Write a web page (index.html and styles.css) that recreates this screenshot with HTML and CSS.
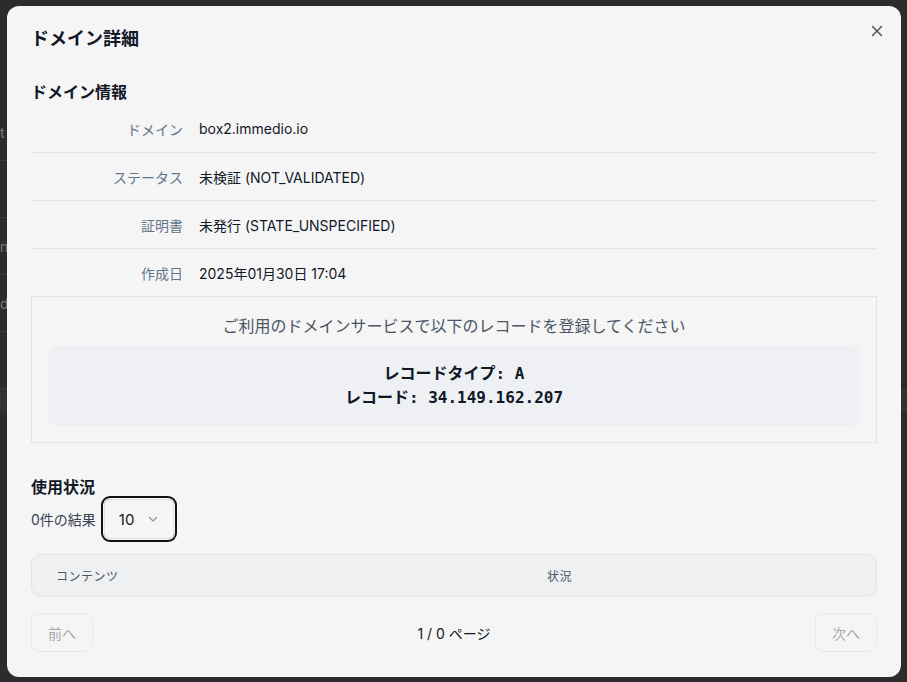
FILE: index.html
```html
<!DOCTYPE html>
<html lang="ja">

<head>
    <meta charset="UTF-8">
    <meta name="viewport" content="width=device-width, initial-scale=1.0">
    <title>ドメイン詳細</title>
    <link rel="stylesheet" href="styles.css">
</head>

<body>

<!-- page behind the dialog -->
<div class="backdrop-page">
    <div class="bg-row"><span>t</span></div>
    <div class="bg-row"></div>
    <div class="bg-row"><span>n</span></div>
    <div class="bg-row"><span>d</span></div>
    <div class="bg-row"></div>
    <div class="bg-band"></div>
</div>

<div class="modal">
    <button class="close-btn" aria-label="閉じる">
        <svg width="14" height="14" viewBox="0 0 14 14">
            <path d="M2.5 2.5 L11.5 11.5 M11.5 2.5 L2.5 11.5" stroke="#4b5563" stroke-width="1.5" stroke-linecap="round"/>
        </svg>
    </button>

    <h1 class="modal-title">ドメイン詳細</h1>

    <h2 class="section-title">ドメイン情報</h2>
    <div class="info-list">
        <div class="info-row">
            <div class="info-label">ドメイン</div>
            <div class="info-value">box2.immedio.io</div>
        </div>
        <div class="info-row">
            <div class="info-label">ステータス</div>
            <div class="info-value">未検証 (NOT_VALIDATED)</div>
        </div>
        <div class="info-row">
            <div class="info-label">証明書</div>
            <div class="info-value">未発行 (STATE_UNSPECIFIED)</div>
        </div>
        <div class="info-row">
            <div class="info-label">作成日</div>
            <div class="info-value">2025年01月30日 17:04</div>
        </div>
    </div>

    <div class="record-box">
        <p class="record-note">ご利用のドメインサービスで以下のレコードを登録してください</p>
        <div class="record-code">
            <div>レコードタイプ: A</div>
            <div>レコード: 34.149.162.207</div>
        </div>
    </div>

    <h2 class="section-title usage-title">使用状況</h2>
    <div class="result-bar">
        <span class="result-count">0件の結果</span>
        <div class="page-size">
            <span>10</span>
            <svg width="12" height="12" viewBox="0 0 12 12">
                <path d="M2.5 4.5 L6 8 L9.5 4.5" fill="none" stroke="#8a94a3" stroke-width="1.2" stroke-linecap="round" stroke-linejoin="round"/>
            </svg>
        </div>
    </div>

    <div class="usage-table">
        <div class="table-head">
            <div>コンテンツ</div>
            <div>状況</div>
        </div>
    </div>

    <div class="pager">
        <button class="pager-btn" disabled>前へ</button>
        <span class="pager-info">1 / 0 ページ</span>
        <button class="pager-btn" disabled>次へ</button>
    </div>
</div>

</body>
</html>
```

FILE: styles.css
```css
body {
    font-family: Inter, "Noto Sans CJK JP", sans-serif;
    margin: 0;
    padding: 0;
    background: #2c2c2d;
    color: #111827;
    height: 682px;
    overflow: hidden;
    position: relative;
}

.backdrop-page {
    padding-top: 104px;
}

.bg-row {
    height: 56px;
    border-bottom: 1px solid #3a3a3b;
    display: flex;
    align-items: center;
    width: 7px;
    color: #7a7a7a;
    font-size: 14px;
}

.bg-band {
    height: 24px;
    background: #323233;
}

.modal {
    position: absolute;
    top: 6px;
    left: 7px;
    width: 894px;
    height: 671px;
    box-sizing: border-box;
    background: #f5f5f5;
    border-radius: 12px;
    padding: 19px 24px 25px 24px;
}

.close-btn {
    position: absolute;
    top: 18px;
    right: 17px;
    background: none;
    border: none;
    padding: 0;
    width: 14px;
    height: 14px;
    cursor: pointer;
}

.close-btn svg {
    display: block;
}

.modal-title {
    font-size: 18px;
    font-weight: 700;
    line-height: 28px;
    margin: 0;
}

.section-title {
    font-size: 16px;
    font-weight: 700;
    line-height: 24px;
    margin: 27px 0 0;
}

.info-list {
    margin-top: 1px;
}

.info-row {
    display: flex;
    align-items: center;
    height: 47px;
    border-bottom: 1px solid #dfe5ed;
    font-size: 14px;
}

.info-row:last-child {
    border-bottom: none;
}

.info-label {
    width: 168px;
    padding-right: 16px;
    text-align: right;
    color: #64748b;
    box-sizing: border-box;
}

.info-value {
    color: #111827;
}

.record-box {
    border: 1px solid #dfe5ed;
    padding: 17px 16px 16px;
}

.record-note {
    margin: 0;
    text-align: center;
    font-size: 16px;
    line-height: 24px;
    color: #4b5563;
}

.record-code {
    margin-top: 8px;
    background: #eef0f3;
    border-radius: 8px;
    padding: 16px;
    text-align: center;
    font-family: "DejaVu Sans Mono", "Noto Sans CJK JP", monospace;
    font-weight: 700;
    font-size: 16px;
    line-height: 24px;
    color: #111827;
}

.usage-title {
    margin-top: 32px;
}

.result-bar {
    display: flex;
    align-items: center;
    gap: 8px;
    font-size: 14px;
}

.result-count {
    color: #374151;
}

.page-size {
    display: flex;
    align-items: center;
    justify-content: space-between;
    width: 70px;
    height: 40px;
    box-sizing: border-box;
    padding: 0 14px 0 14px;
    border: 1px solid #dce4ee;
    border-radius: 6px;
    box-shadow: 0 0 0 1px #f5f5f5, 0 0 0 3px #111;
    font-size: 15px;
}

.usage-table {
    margin-top: 15px;
    background: #eff0f2;
    border: 1px solid #e2e4e8;
    border-radius: 10px;
    box-shadow: 0 1px 2px rgba(0, 0, 0, 0.04);
}

.table-head {
    display: grid;
    grid-template-columns: 491px 1fr;
    height: 40px;
    align-items: center;
    padding-left: 24px;
    font-size: 12px;
    letter-spacing: 0.5px;
    color: #4b5563;
}

.pager {
    margin-top: 17px;
    display: flex;
    align-items: center;
    justify-content: space-between;
}

.pager-btn {
    width: 62px;
    height: 39px;
    background: #f5f5f5;
    border: 1px solid #e6e8eb;
    border-radius: 8px;
    font-family: inherit;
    font-size: 14px;
    color: #a3a8b0;
}

.pager-info {
    font-size: 14px;
    color: #111827;
}
```
